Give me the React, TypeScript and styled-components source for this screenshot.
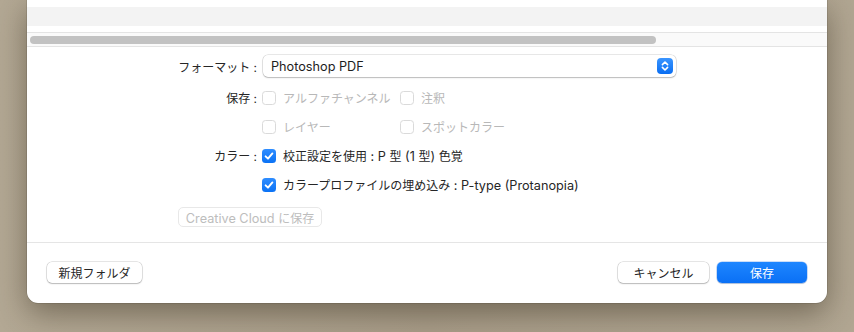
import styled, {createGlobalStyle} from "styled-components";
import type {ReactNode} from "react";

const GlobalStyle = createGlobalStyle`
  html, body {
    margin: 0;
    padding: 0;
    background: linear-gradient(90deg, #b3a894 0%, #a99d89 50%, #b1a692 100%);
  }
  body {
    font-family: Inter, "Noto Sans CJK JP", sans-serif;
    font-size: 12px;
    color: #262626;
  }
`;

type CheckProps = {
  label: ReactNode,
  checked?: boolean,
  disabled?: boolean
}

function Check({label, checked, disabled}: CheckProps) {
  return (
      <CheckItem $disabled={disabled}>
        <Box $checked={checked} $disabled={disabled}>
          {checked &&
          <svg width="14" height="14" viewBox="0 0 14 14">
            <path d="M3.6 7.3 L6 9.7 L10.4 4.4" fill="none" stroke="#fff" strokeWidth="1.9"
                  strokeLinecap="round" strokeLinejoin="round"/>
          </svg>
          }
        </Box>
        <span>{label}</span>
      </CheckItem>
  );
}

function App() {
  return (
      <>
        <GlobalStyle/>
        <Page>
          <Dialog>
            <ListTail>
              <Stripe/>
            </ListTail>
            <ScrollTrack>
              <Thumb/>
            </ScrollTrack>

            <Options>
              <FormatRow>
                <Label>フォーマット :</Label>
                <Popup>
                  <Latin>Photoshop PDF</Latin>
                  <Stepper>
                    <svg width="16" height="16" viewBox="0 0 16 16">
                      <path d="M5.4 6.6 L8 4 L10.6 6.6 M5.4 9.4 L8 12 L10.6 9.4" fill="none" stroke="#fff"
                            strokeWidth="1.6" strokeLinecap="round" strokeLinejoin="round"/>
                    </svg>
                  </Stepper>
                </Popup>
              </FormatRow>

              <Row>
                <Label>保存 :</Label>
                <Check label="アルファチャンネル" disabled/>
                <Check label="注釈" disabled/>
              </Row>
              <Row>
                <Label/>
                <Check label="レイヤー" disabled/>
                <Check label="スポットカラー" disabled/>
              </Row>
              <Row>
                <Label>カラー :</Label>
                <Check label={<>校正設定を使用<Latin> : P </Latin>型<Latin> (1 </Latin>型<Latin>) </Latin>色覚</>} checked/>
              </Row>
              <Row>
                <Label/>
                <Check label={<>カラープロファイルの埋め込み<Latin> : P-type (Protanopia)</Latin></>} checked/>
              </Row>

              <CloudRow>
                <CloudButton type="button" disabled><Latin>Creative Cloud </Latin>に保存</CloudButton>
              </CloudRow>
            </Options>

            <Footer>
              <Button type="button" $width={95}>新規フォルダ</Button>
              <Actions>
                <Button type="button" $width={91}>キャンセル</Button>
                <Button type="button" $width={90} $primary>保存</Button>
              </Actions>
            </Footer>
          </Dialog>
        </Page>
      </>
  );
}

/* CSS */

const Latin = styled.span`
  font-size: 12.7px;
`;

const Page = styled.div`
  height: 332px;
  padding: 0 27px;
  box-sizing: border-box;
  overflow: hidden;
`;

const Dialog = styled.div`
  width: 800px;
  height: 303px;
  background: #fff;
  border-radius: 0 0 11px 11px;
  box-shadow: 0 10px 30px rgba(45, 35, 20, 0.45), 0 0 0 0.5px rgba(0, 0, 0, 0.2);
  display: flex;
  flex-direction: column;
`;

const ListTail = styled.div`
  height: 32px;
  padding-top: 7px;
  box-sizing: border-box;
`;

const Stripe = styled.div`
  height: 19px;
  background: #f3f3f3;
`;

const ScrollTrack = styled.div`
  height: 15px;
  box-sizing: border-box;
  border-top: 1px solid #e4e4e4;
  border-bottom: 1px solid #e4e4e4;
  background: #fafafa;
  padding: 3px 0 0 3px;
`;

const Thumb = styled.div`
  width: 626px;
  height: 8px;
  border-radius: 4px;
  background: #c2c2c2;
`;

const Options = styled.div`
  flex: 1;
  padding-top: 8px;
  border-bottom: 1px solid #e5e5e5;
  display: flex;
  flex-direction: column;
`;

const FormatRow = styled.div`
  display: flex;
  align-items: center;
  height: 22px;
  margin-bottom: 6px;
`;

const Row = styled.div`
  display: flex;
  align-items: center;
  height: 29px;
`;

const Label = styled.div`
  width: 235px;
  flex-shrink: 0;
  text-align: right;
  padding-right: 5px;
  box-sizing: border-box;
  color: #262626;
  white-space: nowrap;
`;

const Popup = styled.div`
  width: 413px;
  height: 22px;
  margin-left: 1px;
  box-sizing: border-box;
  border-radius: 5px;
  background: #fff;
  box-shadow: 0 0 0 0.5px rgba(0, 0, 0, 0.18), 0 1px 1.5px rgba(0, 0, 0, 0.2);
  display: flex;
  align-items: center;
  justify-content: space-between;
  padding: 0 3px 0 8px;
  color: #1d1d1d;
`;

const Stepper = styled.div`
  width: 16px;
  height: 16px;
  border-radius: 4px;
  background: linear-gradient(#3a95ff, #0a6ef2);
  display: flex;
`;

const CheckItem = styled.label<{ $disabled?: boolean }>`
  display: flex;
  align-items: center;
  gap: 7px;
  min-width: 138px;
  color: ${p => p.$disabled ? "#b8b8b8" : "#262626"};
  white-space: nowrap;
`;

const Box = styled.span<{ $checked?: boolean, $disabled?: boolean }>`
  width: 14px;
  height: 14px;
  box-sizing: border-box;
  border-radius: 3.5px;
  display: flex;
  background: ${p => p.$checked ? "linear-gradient(#2f8dff, #0a72f5)" : "#fff"};
  border: ${p => p.$checked ? "none" : "1px solid #dadada"};
`;

const CloudRow = styled.div`
  padding: 8px 0 0 151px;
`;

const CloudButton = styled.button`
  width: 144px;
  height: 20px;
  padding: 0;
  border-radius: 5px;
  border: 1px solid #e8e8e8;
  background: #fff;
  color: #bdbdbd;
  font: inherit;
`;

const Footer = styled.div`
  height: 60px;
  padding: 19px 20px 0;
  box-sizing: border-box;
  display: flex;
  justify-content: space-between;
  align-items: flex-start;
`;

const Actions = styled.div`
  display: flex;
  gap: 8px;
`;

const Button = styled.button<{ $width: number, $primary?: boolean }>`
  width: ${p => p.$width}px;
  height: 21px;
  padding: 0;
  border: none;
  border-radius: 5px;
  font: inherit;
  color: ${p => p.$primary ? "#fff" : "#262626"};
  background: ${p => p.$primary ? "linear-gradient(#1e86ff, #0a70f5)" : "#fff"};
  box-shadow: ${p => p.$primary
    ? "0 0 0 0.5px rgba(0, 90, 220, 0.4), 0 1px 1px rgba(0, 0, 0, 0.15)"
    : "0 0 0 0.5px rgba(0, 0, 0, 0.2), 0 1px 1.5px rgba(0, 0, 0, 0.2)"};
`;

/* CSS */

export default App;
